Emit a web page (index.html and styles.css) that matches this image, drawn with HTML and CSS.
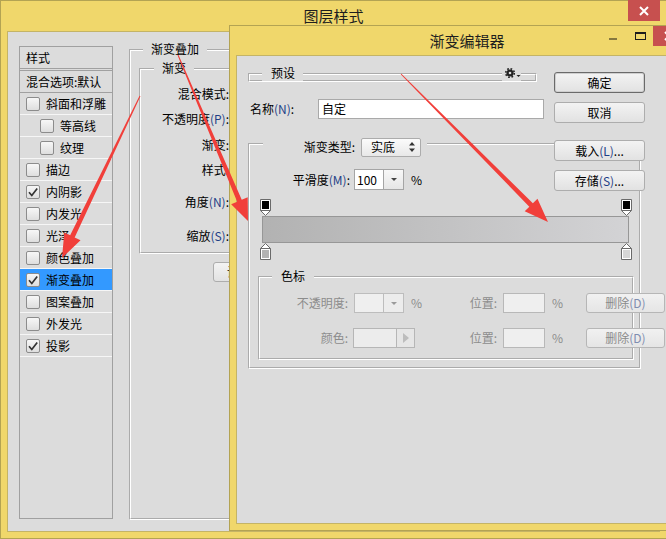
FILE: index.html
```html
<!DOCTYPE html>
<html lang="zh-CN">
<head>
    <meta charset="UTF-8">
    <meta name="viewport" content="width=device-width, initial-scale=1.0">
    <title>图层样式</title>
    <link rel="stylesheet" href="styles.css">
</head>
<body>
    <!-- 图层样式 dialog (behind) -->
    <div class="window layer-style">
        <div class="titlebar">
            <div class="title">图层样式</div>
            <div class="win-controls">
                <button class="win-close">
                    <svg width="10" height="10" viewBox="0 0 10 10"><path d="M1 1L9 9M9 1L1 9" stroke="#fff" stroke-width="2"/></svg>
                </button>
            </div>
        </div>
        <div class="client ls-client">
            <div class="style-list">
                <div class="list-head">样式</div>
                <div class="list-blend">混合选项:默认</div>
                <div class="list-item"><span class="check"></span>斜面和浮雕</div>
                <div class="list-item sub"><span class="check"></span>等高线</div>
                <div class="list-item sub"><span class="check"></span>纹理</div>
                <div class="list-item"><span class="check"></span>描边</div>
                <div class="list-item"><span class="check"><svg width="12" height="12" viewBox="0 0 12 12"><path d="M2 6.3l2.8 3.2L10.2 2.5" fill="none" stroke="#333" stroke-width="1.7"/></svg></span>内阴影</div>
                <div class="list-item"><span class="check"></span>内发光</div>
                <div class="list-item"><span class="check"></span>光泽</div>
                <div class="list-item"><span class="check"></span>颜色叠加</div>
                <div class="list-item selected"><span class="check"><svg width="12" height="12" viewBox="0 0 12 12"><path d="M2 6.3l2.8 3.2L10.2 2.5" fill="none" stroke="#333" stroke-width="1.7"/></svg></span>渐变叠加</div>
                <div class="list-item"><span class="check"></span>图案叠加</div>
                <div class="list-item"><span class="check"></span>外发光</div>
                <div class="list-item"><span class="check"><svg width="12" height="12" viewBox="0 0 12 12"><path d="M2 6.3l2.8 3.2L10.2 2.5" fill="none" stroke="#333" stroke-width="1.7"/></svg></span>投影</div>
            </div>

            <div class="group overlay-group">
                <div class="group-title">渐变叠加</div>
                <div class="group grad-group">
                    <div class="group-title">渐变</div>
                    <div class="prop-list">
                        <label>混合模式:</label>
                        <label>不透明度<span class="acc">(P)</span>:</label>
                        <label>渐变:</label>
                        <label>样式:</label>
                        <label>角度<span class="acc">(N)</span>:</label>
                        <label>缩放<span class="acc">(S)</span>:</label>
                    </div>
                </div>
                <button class="btn reset-btn">设置为默认值</button>
            </div>
        </div>
    </div>

    <!-- 渐变编辑器 dialog (front) -->
    <div class="window grad-editor">
        <div class="titlebar">
            <div class="title">渐变编辑器</div>
            <div class="win-controls">
                <span class="win-min"></span>
                <span class="win-max"></span>
                <button class="win-close">
                    <svg width="10" height="10" viewBox="0 0 10 10"><path d="M1 1L9 9M9 1L1 9" stroke="#fff" stroke-width="2"/></svg>
                </button>
            </div>
        </div>
        <div class="client ed-client">
            <div class="preset">
                <div class="preset-head">
                    <span class="preset-label">预设</span>
                    <span class="preset-gear">
                        <svg width="19" height="16" viewBox="0 0 19 16">
                            <circle cx="8" cy="8" r="4.3" fill="none" stroke="#222" stroke-width="1.6" stroke-dasharray="1.7 1.68"/>
                            <circle cx="8" cy="8" r="3.6" fill="#222"/>
                            <circle cx="8" cy="8" r="1.3" fill="#dcdcdc"/>
                            <path d="M14.5 10h4l-2 2z" fill="#222"/>
                        </svg>
                    </span>
                </div>
            </div>
            <button class="btn btn-default ok-btn">确定</button>

            <div class="name-row">
                <label>名称<span class="acc">(N)</span>:</label>
                <div class="text-input">自定</div>
            </div>
            <button class="btn cancel-btn">取消</button>

            <div class="group type-group">
                <div class="type-title">
                    <label>渐变类型:</label>
                    <div class="select">实底
                        <svg width="6" height="10" viewBox="0 0 6 10"><path d="M3 0L6 3.5H0z M3 10L6 6.5H0z" fill="#333"/></svg>
                    </div>
                </div>

                <div class="smooth-row">
                    <label>平滑度<span class="acc">(M)</span>:</label>
                    <div class="combo">
                        <span class="combo-val">100</span>
                        <span class="combo-btn"><svg width="6" height="3" viewBox="0 0 6 3"><path d="M0 0h6L3 3z" fill="#444"/></svg></span>
                    </div>
                    <span class="pct">%</span>
                </div>

                <div class="stops stops-top">
                    <svg width="11" height="17" viewBox="0 0 11 17"><path d="M0.5 0.5H10.5V11.5L5.5 16.5L0.5 11.5Z M0.5 11.5H10.5" fill="#fff" stroke="#6a6a6a"/><rect x="2" y="2" width="7" height="8" fill="#000"/></svg>
                    <svg width="11" height="17" viewBox="0 0 11 17"><path d="M0.5 0.5H10.5V11.5L5.5 16.5L0.5 11.5Z M0.5 11.5H10.5" fill="#fff" stroke="#6a6a6a"/><rect x="2" y="2" width="7" height="8" fill="#000"/></svg>
                </div>
                <div class="grad-bar"></div>
                <div class="stops">
                    <svg width="11" height="17" viewBox="0 0 11 17"><path d="M5.5 0.5L10.5 5.5V16.5H0.5V5.5Z M0.5 5.5H10.5" fill="#fff" stroke="#6a6a6a"/><rect x="2" y="7" width="7" height="8" fill="#b2b2b2"/></svg>
                    <svg width="11" height="17" viewBox="0 0 11 17"><path d="M5.5 0.5L10.5 5.5V16.5H0.5V5.5Z M0.5 5.5H10.5" fill="#fff" stroke="#6a6a6a"/><rect x="2" y="7" width="7" height="8" fill="#d6d6d6"/></svg>
                </div>

                <div class="group stop-group">
                    <div class="group-title stop-title">色标</div>
                    <div class="stop-row row-opacity">
                        <label class="dim-label">不透明度:</label>
                        <div class="combo disabled">
                            <span class="combo-val"></span>
                            <span class="combo-btn"><svg width="6" height="3" viewBox="0 0 6 3"><path d="M0 0h6L3 3z" fill="#9a9a9a"/></svg></span>
                        </div>
                        <span class="pct dim">%</span>
                        <label class="dim-label pos-label">位置:</label>
                        <div class="small-input"></div>
                        <span class="pct dim">%</span>
                        <button class="btn del-btn">删除<span class="acc">(D)</span></button>
                    </div>
                    <div class="stop-row row-color">
                        <label class="dim-label">颜色:</label>
                        <div class="color-pick">
                            <span class="color-swatch"></span>
                            <span class="color-arrow"><svg width="6" height="10" viewBox="0 0 6 10"><path d="M0 0L6 5L0 10z" fill="#bdbdbd"/></svg></span>
                        </div>
                        <label class="dim-label pos-label wide">位置:</label>
                        <div class="small-input"></div>
                        <span class="pct dim">%</span>
                        <button class="btn del-btn">删除<span class="acc">(D)</span></button>
                    </div>
                </div>
            </div>

            <div class="side-btns">
                <button class="btn load-btn">载入<span class="acc">(L)</span>...</button>
                <button class="btn save-btn">存储<span class="acc">(S)</span>...</button>
            </div>
        </div>
    </div>

    <!-- red annotation arrows drawn over both dialogs -->
    <svg class="arrows" width="666" height="539" viewBox="0 0 666 539">
        <polygon points="177.54,55.19 237.15,201.70 231.16,204.23 248,221 247.74,197.23 241.75,199.76 178.46,54.81"/>
        <polygon points="139.55,95.78 70.16,235.30 64.30,232.48 62,258 80.52,240.28 74.66,237.46 140.45,96.22"/>
        <polygon points="400.65,74.35 529.32,206.73 524.70,211.31 548,222 537.48,198.63 532.86,203.21 401.35,73.65"/>
    </svg>
</body>
</html>
```

FILE: styles.css
```css
* {
    box-sizing: border-box;
}

html, body {
    margin: 0;
    padding: 0;
}

body {
    position: relative;
    width: 666px;
    height: 539px;
    overflow: hidden;
    background: #dcdcdc;
    font-family: "Noto Sans CJK SC", "Microsoft YaHei", sans-serif;
    font-size: 12px;
    line-height: 16px;
    color: #000;
}

button {
    font: inherit;
    color: inherit;
    padding: 0;
    margin: 0;
    cursor: pointer;
}

.acc {
    color: #1f3f86;
}

/* ---------- windows ---------- */

.window {
    position: absolute;
    display: flex;
    flex-direction: column;
    background: #f0d76b;
    border: 1px solid #b3a353;
}

.layer-style {
    left: 0;
    top: 0;
    width: 667px;
    height: 539px;
}

.grad-editor {
    left: 229px;
    top: 25px;
    width: 476px;
    height: 506px;
}

.titlebar {
    display: grid;
    height: 30px;
    flex-shrink: 0;
}

.grad-editor .titlebar {
    height: 29px;
}

.titlebar > * {
    grid-area: 1 / 1;
}

.title {
    justify-self: center;
    align-self: center;
    font-size: 15px;
    line-height: 18px;
    color: #1e1e1e;
}

.win-controls {
    justify-self: end;
    align-self: start;
    display: flex;
    align-items: flex-start;
}

.win-close {
    width: 32px;
    height: 21px;
    border: none;
    background: #c7504f;
    display: flex;
    align-items: center;
    justify-content: center;
}

.layer-style .win-close {
    margin: -1px 6px 0 0;
}

.grad-editor .win-close {
    width: 31px;
    height: 20px;
    margin: 0 20px 0 7px;
}

.win-min {
    width: 8px;
    height: 2px;
    margin-top: 12px;
    background: #86783f;
}

.win-max {
    width: 11px;
    height: 8px;
    margin: 6px 0 0 18px;
    border: 1px solid #1c1c1c;
    border-top-width: 2px;
}

.client {
    flex: 1;
    margin: 0 6px 6px;
    background: #dcdcdc;
    border: 1px solid #c4b466;
}

/* ---------- layer style dialog ---------- */

.ls-client {
    display: flex;
    align-items: flex-start;
    padding: 14px 0 0 11px;
}

.style-list {
    width: 94px;
    height: 473px;
    flex-shrink: 0;
    border: 1px solid #a0a0a0;
}

.list-head {
    height: 22px;
    line-height: 21px;
    padding-left: 6px;
    border-bottom: 1px solid #a0a0a0;
}

.list-blend {
    height: 23px;
    margin-top: 1px;
    line-height: 21px;
    padding-left: 6px;
    border-top: 1px solid #a0a0a0;
    border-bottom: 1px solid #a0a0a0;
}

.list-item {
    display: flex;
    align-items: center;
    height: 22px;
    padding-left: 6px;
    border-bottom: 1px solid #f6f6f6;
    white-space: nowrap;
}

.list-item.sub {
    padding-left: 20px;
}

.list-item.selected {
    background: #3399ff;
}

.check {
    width: 14px;
    height: 14px;
    margin-right: 6px;
    flex-shrink: 0;
    display: flex;
    align-items: center;
    justify-content: center;
    border: 1px solid #8c8c8c;
    border-radius: 2px;
    background: linear-gradient(#f7f7f7, #dedede);
}

.group {
    border: 2px groove #fff;
}

.group-title {
    width: fit-content;
    height: 16px;
    line-height: 16px;
    padding: 0 8px;
    background: #dcdcdc;
    white-space: nowrap;
}

.overlay-group {
    width: 400px;
    height: 471px;
    margin: 3px 0 0 16px;
    flex-shrink: 0;
}

.overlay-group > .group-title {
    margin: -10px 0 0 12px;
}

.grad-group {
    height: 186px;
    margin: 11px 0 0 8px;
}

.grad-group > .group-title {
    margin: -10px 0 0 13px;
}

.prop-list {
    display: grid;
    grid-template-rows: 25px 26px 25px 32px 34px 20px;
    margin-top: 8px;
}

.prop-list label {
    width: 88px;
    line-height: 20px;
    text-align: right;
    white-space: nowrap;
}

.btn {
    height: 21px;
    border: 1px solid #adadad;
    border-radius: 3px;
    background: linear-gradient(#f3f3f3, #e2e2e2);
    text-align: center;
    white-space: nowrap;
}

.reset-btn {
    width: 100px;
    height: 20px;
    margin: 8px 0 0 82px;
}

/* ---------- gradient editor ---------- */

.ed-client {
    display: grid;
    grid-template-columns: 306px 91px;
    align-content: start;
    align-items: start;
    padding: 16px 0 0 11px;
}

.preset {
    grid-column: 1;
    grid-row: 1;
    width: 289px;
    height: 9px;
    margin-top: 1px;
    border: 2px groove #fff;
}

.preset-head {
    display: flex;
    height: 16px;
    margin: -10px 14px 0 12px;
}

.preset-label {
    padding: 0 8px 0 9px;
    background: #dcdcdc;
}

.preset-gear {
    margin-left: auto;
    width: 19px;
    height: 16px;
    background: #dcdcdc;
}

.preset-gear svg {
    display: block;
}

.ok-btn {
    grid-column: 2;
    grid-row: 1;
    border-color: #6a6a6a;
    box-shadow: inset 0 0 0 1px #cfcfcf;
}

.name-row {
    grid-column: 1;
    grid-row: 2;
    display: flex;
    align-items: center;
    margin-top: 6px;
}

.name-row label {
    width: 70px;
    padding-left: 2px;
    white-space: nowrap;
}

.text-input {
    width: 226px;
    height: 20px;
    padding-left: 3px;
    line-height: 18px;
    border: 1px solid #a9a9a9;
    background: #fff;
}

.cancel-btn {
    grid-column: 2;
    grid-row: 2;
    margin-top: 9px;
}

.type-group {
    grid-column: 1 / 3;
    grid-row: 3;
    justify-self: start;
    width: 393px;
    height: 226px;
    margin-top: 20px;
}

.type-title {
    display: flex;
    align-items: center;
    width: fit-content;
    height: 20px;
    margin: -8px 0 0 13px;
    padding-right: 6px;
    background: #dcdcdc;
}

.type-title label {
    width: 92px;
    text-align: right;
    white-space: nowrap;
}

.select {
    display: flex;
    align-items: center;
    width: 60px;
    height: 19px;
    margin-left: 6px;
    padding-left: 9px;
    border: 1px solid #acacac;
    border-radius: 2px;
    background: linear-gradient(#fbfbfb, #e8e8e8);
}

.select svg {
    margin: 0 5px 0 auto;
}

.smooth-row {
    display: flex;
    align-items: center;
    height: 21px;
    margin-top: 12px;
}

.smooth-row label {
    width: 100px;
    text-align: right;
    white-space: nowrap;
}

.smooth-row .combo {
    margin-left: 4px;
}

.combo {
    display: flex;
    width: 50px;
    height: 21px;
    flex-shrink: 0;
    border: 1px solid #a5a5a5;
    background: #fff;
}

.combo-val {
    width: 28px;
    padding-left: 2px;
    line-height: 19px;
}

.combo-btn {
    flex: 1;
    display: flex;
    align-items: center;
    justify-content: center;
    border-left: 1px solid #a5a5a5;
    background: linear-gradient(#f8f8f8, #e6e6e6);
}

.combo.disabled {
    height: 20px;
    border-color: #bdbdbd;
    background: #efefef;
}

.combo.disabled .combo-btn {
    border-left-color: #bdbdbd;
    background: #ececec;
}

.pct {
    width: 14px;
    margin-left: 7px;
    flex-shrink: 0;
}

.pct.dim {
    color: #8c8c8c;
}

.stops {
    display: flex;
    justify-content: space-between;
    width: 372px;
    height: 17px;
    margin-left: 10px;
}

.stops svg {
    display: block;
}

.stops-top {
    margin-top: 9px;
}

.grad-bar {
    width: 367px;
    height: 27px;
    margin-left: 12px;
    border: 1px solid #979797;
    background: linear-gradient(to right, #b2b2b2, #d3d3d5);
}

.stop-group {
    width: 376px;
    height: 84px;
    margin: 16px 0 0 8px;
}

.stop-title {
    margin: -10px 0 0 12px;
    padding: 0 9px;
}

.stop-row {
    display: flex;
    align-items: center;
    height: 20px;
}

.row-opacity {
    margin-top: 9px;
}

.row-color {
    margin-top: 15px;
}

.dim-label {
    width: 88px;
    flex-shrink: 0;
    text-align: right;
    color: #8c8c8c;
    white-space: nowrap;
}

.row-opacity .combo {
    margin-left: 6px;
}

.pos-label {
    width: 72px;
}

.pos-label.wide {
    width: 82px;
}

.small-input {
    width: 42px;
    height: 20px;
    margin-left: 6px;
    flex-shrink: 0;
    border: 1px solid #b8b8b8;
    background: #efefef;
}

.color-pick {
    display: flex;
    width: 62px;
    height: 20px;
    margin-left: 5px;
    flex-shrink: 0;
    border: 1px solid #b6b6b6;
}

.color-swatch {
    width: 43px;
    border-right: 1px solid #b6b6b6;
    background: #ececec;
}

.color-arrow {
    flex: 1;
    display: flex;
    align-items: center;
    justify-content: center;
    background: #e6e6e6;
}

.del-btn {
    width: 79px;
    height: 20px;
    margin-left: 20px;
    flex-shrink: 0;
    color: #8a8a8a;
    border-color: #b6b6b6;
    background: linear-gradient(#f1f1f1, #e5e5e5);
}

.del-btn .acc {
    color: #7f8db0;
}

.side-btns {
    grid-column: 2;
    grid-row: 3;
    display: flex;
    flex-direction: column;
}

.load-btn {
    margin-top: 17px;
}

.save-btn {
    margin-top: 9px;
}

/* ---------- annotation ---------- */

.arrows {
    position: absolute;
    left: 0;
    top: 0;
    pointer-events: none;
}

.arrows polygon {
    fill: #f13f3a;
}
```
